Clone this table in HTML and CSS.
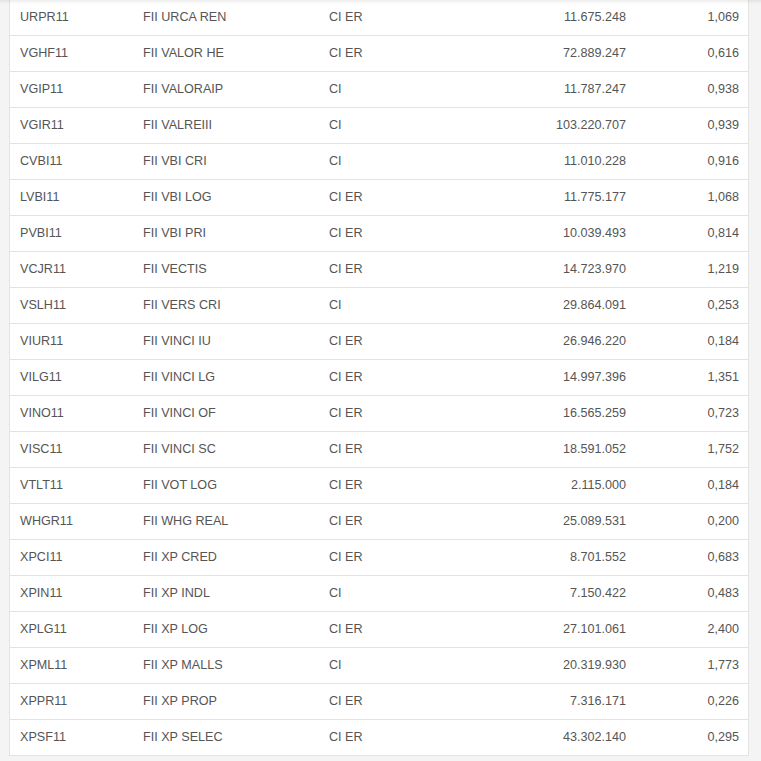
FILE: index.html
```html
<!DOCTYPE html>
<html lang="pt-BR">
<head>
<meta charset="utf-8">
<title>FIIs</title>
<link rel="stylesheet" href="styles.css">
</head>
<body>
<div class="top-shade"></div>
<div class="panel">
<table class="fii-table">
<colgroup>
<col class="c1"><col class="c2"><col class="c3"><col class="c4"><col class="c5">
</colgroup>
<tbody>
<tr><td>URPR11</td><td>FII URCA REN</td><td>CI ER</td><td class="num">11.675.248</td><td class="num last">1,069</td></tr>
<tr><td>VGHF11</td><td>FII VALOR HE</td><td>CI ER</td><td class="num">72.889.247</td><td class="num last">0,616</td></tr>
<tr><td>VGIP11</td><td>FII VALORAIP</td><td>CI</td><td class="num">11.787.247</td><td class="num last">0,938</td></tr>
<tr><td>VGIR11</td><td>FII VALREIII</td><td>CI</td><td class="num">103.220.707</td><td class="num last">0,939</td></tr>
<tr><td>CVBI11</td><td>FII VBI CRI</td><td>CI</td><td class="num">11.010.228</td><td class="num last">0,916</td></tr>
<tr><td>LVBI11</td><td>FII VBI LOG</td><td>CI ER</td><td class="num">11.775.177</td><td class="num last">1,068</td></tr>
<tr><td>PVBI11</td><td>FII VBI PRI</td><td>CI ER</td><td class="num">10.039.493</td><td class="num last">0,814</td></tr>
<tr><td>VCJR11</td><td>FII VECTIS</td><td>CI ER</td><td class="num">14.723.970</td><td class="num last">1,219</td></tr>
<tr><td>VSLH11</td><td>FII VERS CRI</td><td>CI</td><td class="num">29.864.091</td><td class="num last">0,253</td></tr>
<tr><td>VIUR11</td><td>FII VINCI IU</td><td>CI ER</td><td class="num">26.946.220</td><td class="num last">0,184</td></tr>
<tr><td>VILG11</td><td>FII VINCI LG</td><td>CI ER</td><td class="num">14.997.396</td><td class="num last">1,351</td></tr>
<tr><td>VINO11</td><td>FII VINCI OF</td><td>CI ER</td><td class="num">16.565.259</td><td class="num last">0,723</td></tr>
<tr><td>VISC11</td><td>FII VINCI SC</td><td>CI ER</td><td class="num">18.591.052</td><td class="num last">1,752</td></tr>
<tr><td>VTLT11</td><td>FII VOT LOG</td><td>CI ER</td><td class="num">2.115.000</td><td class="num last">0,184</td></tr>
<tr><td>WHGR11</td><td>FII WHG REAL</td><td>CI ER</td><td class="num">25.089.531</td><td class="num last">0,200</td></tr>
<tr><td>XPCI11</td><td>FII XP CRED</td><td>CI ER</td><td class="num">8.701.552</td><td class="num last">0,683</td></tr>
<tr><td>XPIN11</td><td>FII XP INDL</td><td>CI</td><td class="num">7.150.422</td><td class="num last">0,483</td></tr>
<tr><td>XPLG11</td><td>FII XP LOG</td><td>CI ER</td><td class="num">27.101.061</td><td class="num last">2,400</td></tr>
<tr><td>XPML11</td><td>FII XP MALLS</td><td>CI</td><td class="num">20.319.930</td><td class="num last">1,773</td></tr>
<tr><td>XPPR11</td><td>FII XP PROP</td><td>CI ER</td><td class="num">7.316.171</td><td class="num last">0,226</td></tr>
<tr><td>XPSF11</td><td>FII XP SELEC</td><td>CI ER</td><td class="num">43.302.140</td><td class="num last">0,295</td></tr>
</tbody>
</table>
</div>
</body>
</html>
```
FILE: styles.css
```css
html, body {
  margin: 0;
  padding: 0;
  background: #f4f4f4;
  overflow: hidden;
}
body {
  font-family: "Liberation Sans", Arial, sans-serif;
  font-size: 12.6px;
  color: #555;
}
.top-shade {
  position: fixed;
  left: 0;
  top: 0;
  right: 0;
  height: 4px;
  background: linear-gradient(to bottom, rgba(0,0,0,0.07), rgba(0,0,0,0));
  pointer-events: none;
}
.panel {
  margin: -1px 0 0 9px;
  width: 738px;
  background: #fff;
  border-left: 1px solid #e4e4e4;
  border-right: 1px solid #e4e4e4;
}
.fii-table {
  width: 738px;
  border-collapse: collapse;
  table-layout: fixed;
}
.c1 { width: 123px; }
.c2 { width: 186px; }
.c3 { width: 150px; }
.c4 { width: 167px; }
.c5 { width: 112px; }
.fii-table td {
  border-top: 1px solid #e2e2e2;
  padding: 8px 10px;
  line-height: 19px;
  height: 19px;
  white-space: nowrap;
  vertical-align: middle;
}
.fii-table tr:last-child td {
  border-bottom: 1px solid #e2e2e2;
}
.fii-table td.num {
  text-align: right;
}
.fii-table td.last {
  padding-right: 9px;
}
```
